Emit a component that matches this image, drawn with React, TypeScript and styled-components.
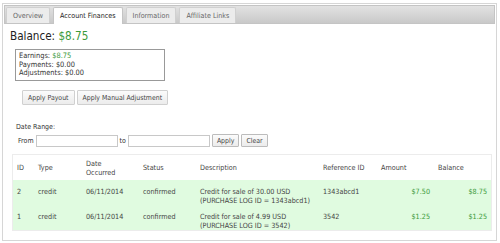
import styled, { createGlobalStyle } from "styled-components";

const GREEN = "#3a9a3a";
const TEXT = "#333";

const GlobalStyle = createGlobalStyle`
  html, body { margin: 0; padding: 0; background: #fff; }
  body { font-family: "DejaVu Sans Condensed", "DejaVu Sans", Verdana, sans-serif; color: ${TEXT}; }
`;

const Panel = styled.div`
  margin: 3px 2px 0 2px;
  width: 495px;
  height: 238px;
  box-sizing: border-box;
  border: 1px solid #d6d6d6;
  padding: 1px;
  display: flex;
  flex-direction: column;
`;

const TabBar = styled.div`
  height: 19px;
  box-sizing: border-box;
  border: 1px solid #c4c4c4;
  background: linear-gradient(#e2e2e2, #c9c9c9);
  display: flex;
  align-items: flex-end;
  gap: 3px;
  padding-left: 1px;
`;

const Tab = styled.div<{ $active?: boolean }>`
  height: ${(p) => (p.$active ? 17 : 16)}px;
  margin-bottom: ${(p) => (p.$active ? -1 : 0)}px;
  box-sizing: border-box;
  padding: 0 6px;
  border: 1px solid ${(p) => (p.$active ? "#c4c4c4" : "#d0d0d0")};
  border-bottom: none;
  border-radius: 2px 2px 0 0;
  background: ${(p) => (p.$active ? "#fff" : "#ececec")};
  color: ${(p) => (p.$active ? "#222" : "#666")};
  font-size: 7.1px;
  line-height: 16px;
`;

const Body = styled.div`
  padding: 4px 8px 0 6px;
  display: flex;
  flex-direction: column;
`;

const Balance = styled.div`
  font-size: 11.6px;
  color: #222;
  line-height: 16px;
`;

const Money = styled.span`
  color: ${GREEN};
`;

const Summary = styled.div`
  margin: 5px 0 0 5px;
  width: 150px;
  height: 32px;
  box-sizing: border-box;
  border: 1px solid #999;
  padding: 2px 3px;
  font-size: 7.4px;
  line-height: 8.6px;
`;

const ButtonRow = styled.div`
  display: flex;
  gap: 2px;
  margin: 9px 0 0 12px;
`;

const Button = styled.button`
  font-family: inherit;
  font-size: 6.9px;
  color: #444;
  height: 15px;
  padding: 0 5px;
  border: 1px solid #d0d0d0;
  background: linear-gradient(#fbfbfb, #ececec);
  border-radius: 1px;
  cursor: pointer;
`;

const SmallButton = styled(Button)`
  height: 13px;
  padding: 0 4px;
  margin-left: 2px;
  border-color: #bcbcbc;
`;

const DateRange = styled.div`
  margin: 18px 0 0 6px;
  font-size: 7px;
  color: #333;
`;

const DateRow = styled.div`
  display: flex;
  align-items: center;
  margin-top: 3px;
`;

const Input = styled.input`
  width: 82px;
  height: 12px;
  box-sizing: border-box;
  border: 1px solid #c8c8c8;
  margin: 0;
  padding: 0;
`;

const Label = styled.span`
  margin: 0 2px 0 2px;
`;

const TableWrap = styled.div`
  margin: 7px 0 0 2px;
  width: 478px;
  border: 1px solid #ececec;
`;

const Table = styled.table`
  width: 100%;
  border-collapse: collapse;
  table-layout: fixed;
  font-size: 7.2px;
  th, td {
    text-align: left;
    vertical-align: top;
    padding: 0 4px;
    white-space: nowrap;
  }
  th {
    font-weight: normal;
    color: #444;
    height: 25px;
    vertical-align: middle;
    line-height: 9px;
  }
  td {
    height: 25px;
    box-sizing: border-box;
    padding-top: 7px;
    line-height: 9px;
    color: #444;
  }
`;

const Row = styled.tr`
  background: #e0fbe0;
`;

const Num = styled.td`
  && {
    text-align: right;
    color: ${GREEN};
  }
`;

const tabs = ["Overview", "Account Finances", "Information", "Affiliate Links"];

const rows = [
  {
    id: "2",
    desc: "Credit for sale of 30.00 USD",
    log: "(PURCHASE LOG ID = 1343abcd1)",
    ref: "1343abcd1",
    amount: "$7.50",
    balance: "$8.75",
  },
  {
    id: "1",
    desc: "Credit for sale of 4.99 USD",
    log: "(PURCHASE LOG ID = 3542)",
    ref: "3542",
    amount: "$1.25",
    balance: "$1.25",
  },
];

export default function App() {
  return (
    <>
      <GlobalStyle />
      <Panel>
        <TabBar>
          {tabs.map((t) => (
            <Tab key={t} $active={t === "Account Finances"}>
              {t}
            </Tab>
          ))}
        </TabBar>
        <Body>
          <Balance>
            Balance: <Money>$8.75</Money>
          </Balance>
          <Summary>
            <div>
              Earnings: <Money>$8.75</Money>
            </div>
            <div>Payments: $0.00</div>
            <div>Adjustments: $0.00</div>
          </Summary>
          <ButtonRow>
            <Button>Apply Payout</Button>
            <Button>Apply Manual Adjustment</Button>
          </ButtonRow>
          <DateRange>
            <div>Date Range:</div>
            <DateRow>
              <Label>From</Label>
              <Input />
              <Label>to</Label>
              <Input />
              <SmallButton>Apply</SmallButton>
              <SmallButton>Clear</SmallButton>
            </DateRow>
          </DateRange>
          <TableWrap>
            <Table>
              <colgroup>
                <col style={{ width: 21 }} />
                <col style={{ width: 48 }} />
                <col style={{ width: 57 }} />
                <col style={{ width: 57 }} />
                <col style={{ width: 123 }} />
                <col style={{ width: 58 }} />
                <col style={{ width: 57 }} />
                <col style={{ width: 57 }} />
              </colgroup>
              <thead>
                <tr>
                  <th>ID</th>
                  <th>Type</th>
                  <th>
                    Date
                    <br />
                    Occurred
                  </th>
                  <th>Status</th>
                  <th>Description</th>
                  <th>Reference ID</th>
                  <th>Amount</th>
                  <th>Balance</th>
                </tr>
              </thead>
              <tbody>
                {rows.map((r) => (
                  <Row key={r.id}>
                    <td>{r.id}</td>
                    <td>credit</td>
                    <td>06/11/2014</td>
                    <td>confirmed</td>
                    <td>
                      {r.desc}
                      <br />
                      {r.log}
                    </td>
                    <td>{r.ref}</td>
                    <Num>{r.amount}</Num>
                    <Num>{r.balance}</Num>
                  </Row>
                ))}
              </tbody>
            </Table>
          </TableWrap>
        </Body>
      </Panel>
    </>
  );
}
